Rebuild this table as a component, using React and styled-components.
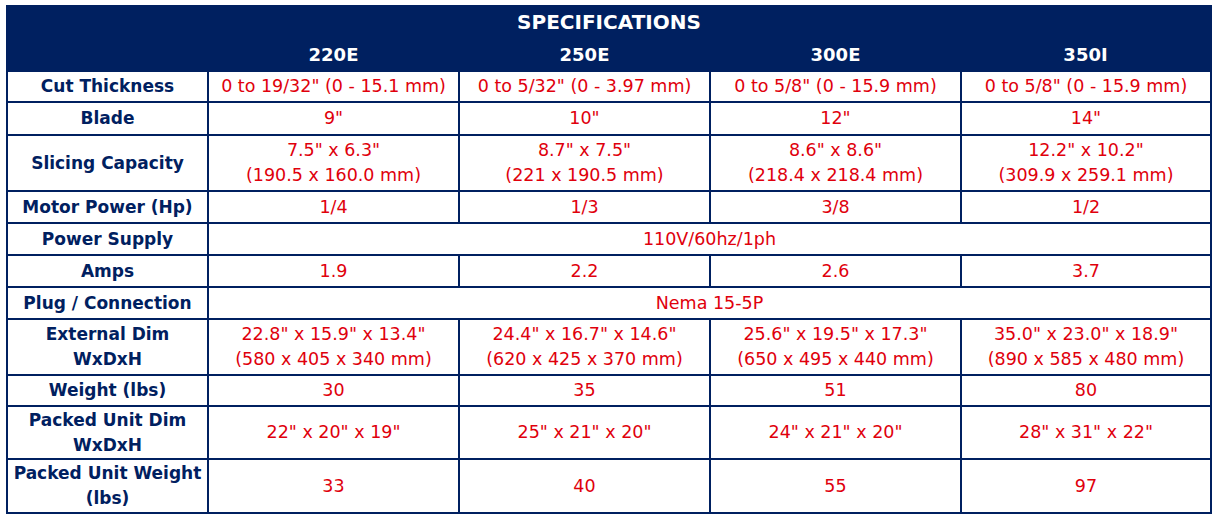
import styled, { createGlobalStyle } from "styled-components";

const NAVY = "#002060";
const RED = "#e0000c";

const GlobalStyle = createGlobalStyle`
  html, body {
    margin: 0;
    padding: 0;
    background: #ffffff;
  }
  body {
    font-family: "DejaVu Sans", "Liberation Sans", sans-serif;
  }
`;

const Page = styled.div`
  padding: 5px 0 0 6px;
`;

const SpecTable = styled.table`
  width: 1206px;
  table-layout: fixed;
  border-collapse: collapse;
  border: 2px solid ${NAVY};
`;

const HeadRow = styled.tr`
  height: ${({ $h }) => $h}px;
  background: ${NAVY};
`;

const TitleCell = styled.th`
  padding: 0 0 2px;
  color: #ffffff;
  font-size: 20px;
  font-weight: 700;
  text-align: center;
  vertical-align: middle;
  line-height: 24px;
`;

const ModelCell = styled.th`
  padding: 0;
  color: #ffffff;
  font-size: 18px;
  font-weight: 700;
  text-align: center;
  vertical-align: middle;
`;

const BodyRow = styled.tr`
  height: ${({ $h }) => $h}px;
`;

const LabelCell = styled.th`
  padding: 0;
  border: 2px solid ${NAVY};
  color: ${NAVY};
  font-size: 17px;
  font-weight: 700;
  line-height: 25px;
  text-align: center;
  vertical-align: middle;
  white-space: nowrap;
`;

const ValueCell = styled.td`
  padding: 0;
  border: 2px solid ${NAVY};
  color: ${RED};
  font-size: 17.5px;
  line-height: 25px;
  text-align: center;
  vertical-align: middle;
  white-space: nowrap;
`;

const Line = styled.span`
  display: block;
`;

const models = ["220E", "250E", "300E", "350I"];

const rows = [
  {
    label: ["Cut Thickness"],
    h: 31,
    values: [
      ['0 to 19/32" (0 - 15.1 mm)'],
      ['0 to 5/32" (0 - 3.97 mm)'],
      ['0 to 5/8" (0 - 15.9 mm)'],
      ['0 to 5/8" (0 - 15.9 mm)'],
    ],
  },
  { label: ["Blade"], h: 33, values: [['9"'], ['10"'], ['12"'], ['14"']] },
  {
    label: ["Slicing Capacity"],
    h: 56,
    values: [
      ['7.5" x 6.3"', "(190.5 x 160.0 mm)"],
      ['8.7" x 7.5"', "(221 x 190.5 mm)"],
      ['8.6" x 8.6"', "(218.4 x 218.4 mm)"],
      ['12.2" x 10.2"', "(309.9 x 259.1 mm)"],
    ],
  },
  { label: ["Motor Power (Hp)"], h: 32, values: [["1/4"], ["1/3"], ["3/8"], ["1/2"]] },
  { label: ["Power Supply"], h: 32, span: ["110V/60hz/1ph"] },
  { label: ["Amps"], h: 32, values: [["1.9"], ["2.2"], ["2.6"], ["3.7"]] },
  { label: ["Plug / Connection"], h: 32, span: ["Nema 15-5P"] },
  {
    label: ["External Dim", "WxDxH"],
    h: 56,
    values: [
      ['22.8" x 15.9" x 13.4"', "(580 x 405 x 340 mm)"],
      ['24.4" x 16.7" x 14.6"', "(620 x 425 x 370 mm)"],
      ['25.6" x 19.5" x 17.3"', "(650 x 495 x 440 mm)"],
      ['35.0" x 23.0" x 18.9"', "(890 x 585 x 480 mm)"],
    ],
  },
  { label: ["Weight (lbs)"], h: 31, values: [["30"], ["35"], ["51"], ["80"]] },
  {
    label: ["Packed Unit Dim", "WxDxH"],
    h: 53,
    values: [
      ['22" x 20" x 19"'],
      ['25" x 21" x 20"'],
      ['24" x 21" x 20"'],
      ['28" x 31" x 22"'],
    ],
  },
  {
    label: ["Packed Unit Weight", "(lbs)"],
    h: 54,
    values: [["33"], ["40"], ["55"], ["97"]],
  },
];

const Lines = ({ items }) => items.map((t, i) => <Line key={i}>{t}</Line>);

export default function App() {
  return (
    <>
      <GlobalStyle />
      <Page>
        <SpecTable>
          <colgroup>
            <col style={{ width: 201 }} />
            <col style={{ width: 251 }} />
            <col style={{ width: 251 }} />
            <col style={{ width: 251 }} />
            <col style={{ width: 250 }} />
          </colgroup>
          <thead>
            <HeadRow $h={33}>
              <TitleCell colSpan={5}>SPECIFICATIONS</TitleCell>
            </HeadRow>
            <HeadRow $h={32}>
              <ModelCell />
              {models.map((m) => (
                <ModelCell key={m}>{m}</ModelCell>
              ))}
            </HeadRow>
          </thead>
          <tbody>
            {rows.map((r) => (
              <BodyRow key={r.label.join(" ")} $h={r.h}>
                <LabelCell>
                  <Lines items={r.label} />
                </LabelCell>
                {r.span ? (
                  <ValueCell colSpan={4}>
                    <Lines items={r.span} />
                  </ValueCell>
                ) : (
                  r.values.map((v, i) => (
                    <ValueCell key={i}>
                      <Lines items={v} />
                    </ValueCell>
                  ))
                )}
              </BodyRow>
            ))}
          </tbody>
        </SpecTable>
      </Page>
    </>
  );
}
